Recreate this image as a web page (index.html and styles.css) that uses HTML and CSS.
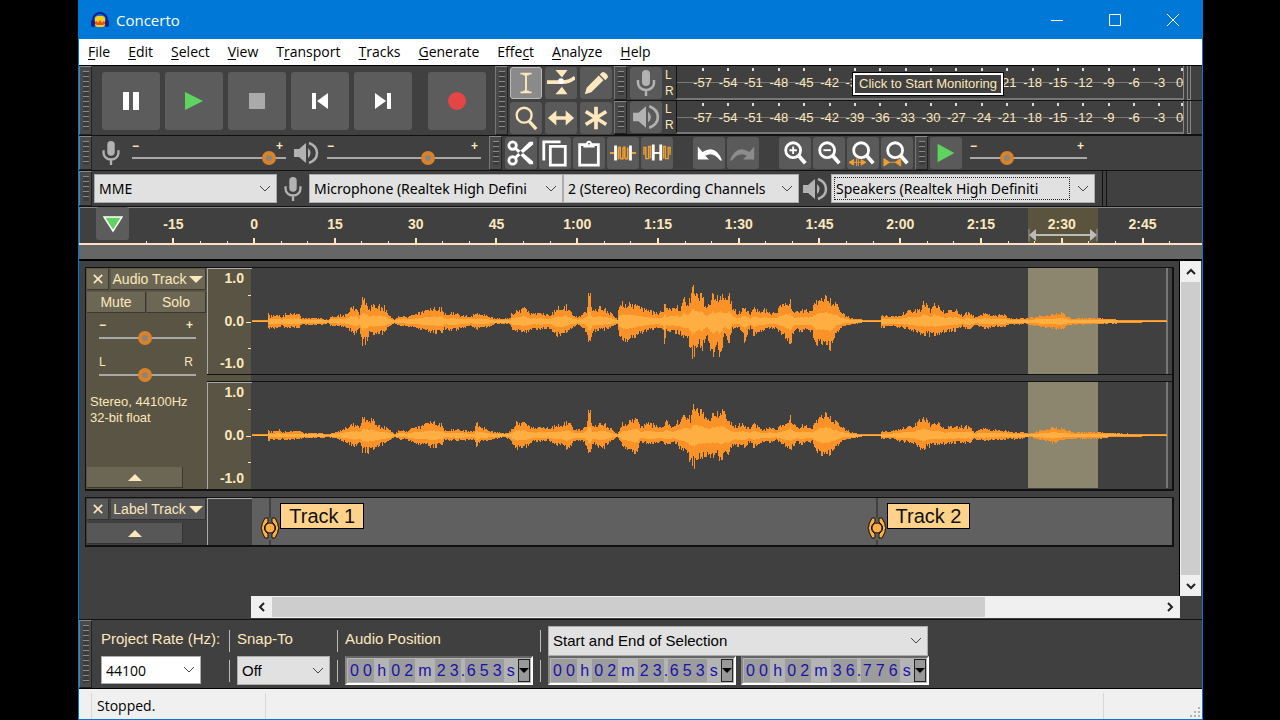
FILE: index.html
```html
<!DOCTYPE html>
<html lang="en">
<head>
    <meta charset="utf-8">
    <title>Concerto</title>
    <link rel="stylesheet" href="styles.css">
</head>
<body>
    <svg class="symbols" aria-hidden="true">
        <symbol id="mic" viewBox="0 0 24 28">
            <rect x="8" y="1" width="8" height="16" rx="4" fill="#b2b2b2"/>
            <path d="M4 11v3a8 7 0 0 0 16 0v-3M12 21v6" fill="none" stroke="#b2b2b2" stroke-width="2.5"/>
        </symbol>
        <symbol id="speaker" viewBox="0 0 26 24">
            <path d="M1 8h5l7-6v20l-7-6H1z" fill="#b2b2b2"/>
            <path d="M15 7q5 5 0 10z" fill="#b2b2b2"/>
            <path d="M16 2q8 3 8 10t-8 10" fill="none" stroke="#b2b2b2" stroke-width="2.500"/>
        </symbol>
        <symbol id="lens" viewBox="0 0 30 30">
            <circle cx="13" cy="12" r="8" fill="none" stroke="#fff" stroke-width="3"/>
            <path d="M19 18l7 8" stroke="#fff" stroke-width="4"/>
        </symbol>
    </svg>

    <div class="window">
        <header class="titlebar">
            <svg class="logo" viewBox="0 0 18 18">
                <path d="M2 12V9a7 7 0 0 1 14 0v3" fill="none" stroke="#1b1f86" stroke-width="2"/>
                <rect x="0" y="9" width="4" height="7" rx="2" fill="#1b1f86"/>
                <rect x="14" y="9" width="4" height="7" rx="2" fill="#1b1f86"/>
                <rect x="4" y="5" width="10" height="11" rx="3" fill="#f6cf1d"/>
                <path d="M4 11l2-1 1 2 2-3 2 3 1-2 2 1v2l-2 1H6l-2-1z" fill="#e8511b"/>
            </svg>
            <span class="title">Concerto</span>
            <button class="win-btn" aria-label="Minimize"><svg viewBox="0 0 14 14"><path d="M1 7.500h12"/></svg></button>
            <button class="win-btn" aria-label="Maximize"><svg viewBox="0 0 14 14"><path d="M1.500 1.500h11v11h-11z"/></svg></button>
            <button class="win-btn" aria-label="Close"><svg viewBox="0 0 14 14"><path d="M1 1l12 12M13 1L1 13"/></svg></button>
        </header>

        <nav class="menubar">
            <a href="#"><u>F</u>ile</a>
            <a href="#"><u>E</u>dit</a>
            <a href="#"><u>S</u>elect</a>
            <a href="#"><u>V</u>iew</a>
            <a href="#">T<u>r</u>ansport</a>
            <a href="#"><u>T</u>racks</a>
            <a href="#"><u>G</u>enerate</a>
            <a href="#">Effe<u>c</u>t</a>
            <a href="#"><u>A</u>nalyze</a>
            <a href="#"><u>H</u>elp</a>
        </nav>

        <!-- transport, tools and meters -->
        <div class="toolbar toolbar-main">
            <div class="grip"></div>
            <div class="transport">
                <button aria-label="Pause"><svg viewBox="0 0 20 20"><path d="M2 1h6v18H2zM12 1h6v18h-6z" fill="#fff"/></svg></button>
                <button aria-label="Play"><svg viewBox="0 0 20 20"><path d="M1 1l18 9-18 9z" fill="#5fd35f"/></svg></button>
                <button aria-label="Stop"><svg viewBox="0 0 20 20"><path d="M2 2h16v16H2z" fill="#aaa"/></svg></button>
                <button aria-label="Skip to Start"><svg viewBox="0 0 20 20"><path d="M2 2h4v16H2zM18 2v16L7 10z" fill="#fff"/></svg></button>
                <button aria-label="Skip to End"><svg viewBox="0 0 20 20"><path d="M14 2h4v16h-4zM2 2v16l11-8z" fill="#fff"/></svg></button>
                <button class="record" aria-label="Record"><svg viewBox="0 0 20 20"><circle cx="10" cy="10" r="9" fill="#e64545"/></svg></button>
            </div>
            <div class="grip"></div>
            <div class="tools">
                <button class="active" aria-label="Selection Tool"><svg viewBox="0 0 30 30"><path d="M9 5h12M9 25h12M15 5v20M12 6h6M12 24h6" fill="none" stroke="#fde7bd" stroke-width="2"/></svg></button>
                <button aria-label="Envelope Tool"><svg viewBox="0 0 30 30"><path d="M9 1h13l-6 8zM9 27h13l-6-8z" fill="#fde7bd"/><path d="M0 14h14q9 1 16-5" fill="none" stroke="#fde7bd" stroke-width="4"/><circle cx="15" cy="13" r="3" fill="#fff"/></svg></button>
                <button aria-label="Draw Tool"><svg viewBox="0 0 30 30"><path d="M3 27l2-7L18 7l5 5L10 25zM19 6l2-2q2-2 5 1t1 5l-2 2z" fill="#fde7bd"/></svg></button>
                <button aria-label="Zoom Tool"><svg viewBox="0 0 30 30"><circle cx="13" cy="12" r="8" fill="none" stroke="#fde7bd" stroke-width="2.500"/><path d="M18 18l8 9" stroke="#fde7bd" stroke-width="3.500"/></svg></button>
                <button aria-label="Time Shift Tool"><svg viewBox="0 0 30 30"><path d="M1 15l9-8v6h10V7l9 8-9 8v-6H10v6z" fill="#fde7bd"/></svg></button>
                <button aria-label="Multi Tool"><svg viewBox="0 0 30 30"><path d="M15 3v24M4 8l22 14M26 8L4 22" stroke="#fde7bd" stroke-width="4"/></svg></button>
            </div>
            <div class="meters">
                <div class="meter">
                    <div class="grip"></div>
                    <button class="tool" aria-label="Record Meter"><svg viewBox="0 0 24 28"><use href="#mic"/></svg></button>
                    <div class="channels"><span>L</span><span>R</span></div>
                    <div class="scale"></div>
                    <div class="clip"></div>
                    <div class="tooltip">Click to Start Monitoring</div>
                </div>
                <div class="meter">
                    <div class="grip"></div>
                    <button class="tool" aria-label="Playback Meter"><svg viewBox="0 0 26 24"><use href="#speaker"/></svg></button>
                    <div class="channels"><span>L</span><span>R</span></div>
                    <div class="scale"></div>
                    <div class="clip"></div>
                </div>
            </div>
        </div>

        <!-- mixer, edit and play-at-speed -->
        <div class="toolbar toolbar-edit">
            <div class="grip"></div>
            <svg class="device" viewBox="0 0 24 28"><use href="#mic"/></svg>
            <label class="slider"><span class="ends"><b>−</b><b>+</b></span><input type="range" value="93" aria-label="Recording Volume"></label>
            <svg class="device" viewBox="0 0 26 24"><use href="#speaker"/></svg>
            <label class="slider"><span class="ends"><b>−</b><b>+</b></span><input type="range" value="67" aria-label="Playback Volume"></label>
            <div class="grip"></div>
            <div class="edit-group">
                <button class="tool" aria-label="Cut"><svg viewBox="0 0 30 30"><g fill="none" stroke="#fff" stroke-width="3"><circle cx="6" cy="7" r="4"/><circle cx="6" cy="23" r="4"/></g><path d="M9 8L28 24v3h-4L8 11zM9 22L28 6V3h-4L8 19z" fill="#fff"/></svg></button>
                <button class="tool" aria-label="Copy"><svg viewBox="0 0 30 30"><path d="M3 23V3h18M10 8h16v20H10z" fill="none" stroke="#fff" stroke-width="3"/></svg></button>
                <button class="tool" aria-label="Paste"><svg viewBox="0 0 30 30"><path d="M5 6h20v22H5z" fill="none" stroke="#fff" stroke-width="3"/><path d="M9 9V5h3a3 3 0 0 1 6 0h3v4z" fill="#fff"/><circle cx="15" cy="5" r="1" fill="#5a5a5a"/></svg></button>
                <button class="tool" aria-label="Trim"><svg viewBox="0 0 30 30"><path d="M1 15h6M23 15h6" stroke="#f0a030" stroke-width="2"/><path d="M10 9v13M12 8v13M15 9v13M17 8v13M20 9v13M10 9h2M12 21h3M15 9h2M17 21h3" fill="none" stroke="#f0a030" stroke-width="1.700"/><path d="M7 7v16M23 7v16" stroke="#fff" stroke-width="3"/></svg></button>
                <button class="tool" aria-label="Silence"><svg viewBox="0 0 30 30"><path d="M1 17V9h2v12h3V8h2v13M22 21V8h2v13h3V9h2v8" fill="none" stroke="#f0a030" stroke-width="1.500"/><path d="M11 6v17M19 6v17" stroke="#fff" stroke-width="3"/><path d="M11 15h8" stroke="#fff" stroke-width="2"/></svg></button>
            </div>
            <div class="edit-group">
                <button class="tool" aria-label="Undo"><svg viewBox="0 0 30 30"><path d="M3 8v14h12l-4-4q8-5 16 5h2Q22 5 8 14z" fill="#fff"/></svg></button>
                <button class="tool" aria-label="Redo"><svg viewBox="0 0 30 30"><path d="M27 8v14H15l4-4q-8-5-16 5H1Q8 5 22 14z" fill="#8c8c8c"/></svg></button>
            </div>
            <div class="edit-group">
                <button class="tool" aria-label="Zoom In"><svg viewBox="0 0 30 30"><use href="#lens"/><path d="M9 12h8M13 8v8" stroke="#fff" stroke-width="2"/></svg></button>
                <button class="tool" aria-label="Zoom Out"><svg viewBox="0 0 30 30"><use href="#lens"/><path d="M9 12h8" stroke="#fff" stroke-width="2"/></svg></button>
                <button class="tool" aria-label="Fit Selection"><svg viewBox="0 0 30 30"><use href="#lens"/><path d="M0 25l5-3v6zM18 25l-5-3v6zM4 25h10M8 21v8M10 21v8" fill="#f0a030" stroke="#f0a030"/></svg></button>
                <button class="tool" aria-label="Fit Project"><svg viewBox="0 0 30 30"><use href="#lens"/><path d="M1 21v8l6-4zM19 21v8l-6-4zM7 25h6" fill="#f0a030" stroke="#f0a030"/></svg></button>
            </div>
            <div class="grip"></div>
            <button class="tool play-speed" aria-label="Play at Speed"><svg viewBox="0 0 30 30"><path d="M6 5l18 10L6 25z" fill="#5fd35f"/></svg></button>
            <label class="slider short"><span class="ends"><b>−</b><b>+</b></span><input type="range" value="29" aria-label="Playback Speed"></label>
        </div>

        <!-- devices -->
        <div class="toolbar toolbar-device">
            <div class="grip"></div>
            <select class="host" aria-label="Audio Host"><option>MME</option></select>
            <svg class="device" viewBox="0 0 24 28"><use href="#mic"/></svg>
            <select class="input-device" aria-label="Recording Device"><option>Microphone (Realtek High Defini</option></select>
            <select class="input-channels" aria-label="Recording Channels"><option>2 (Stereo) Recording Channels</option></select>
            <svg class="device" viewBox="0 0 26 24"><use href="#speaker"/></svg>
            <div class="output-device"><select aria-label="Playback Device"><option>Speakers (Realtek High Definiti</option></select></div>
            <div class="toolbar-end"></div>
        </div>

        <div class="timeline">
            <div class="ruler">
                <div class="ruler-lead">
                    <button class="pin" aria-label="Pinned Play Head"><svg viewBox="0 0 20 18"><path d="M1 2h18l-9 14z" fill="#5fd35f" stroke="#fff" stroke-width="1.500"/></svg></button>
                </div>
                <div class="ruler-cells" id="ruler"></div>
                <div class="ruler-selection">
                    <svg viewBox="0 0 70 12"><path d="M1 0v12M69 0v12" stroke="#999"/><path d="M6 6h58" stroke="#bbb" stroke-width="2"/><path d="M1 6l7-6v12zM69 6l-7-6v12z" fill="#bbb"/></svg>
                </div>
            </div>
            <div class="scrub"></div>
        </div>

        <main class="tracks">
            <div class="track-area">
                <section class="track audio-track">
                    <div class="panel">
                        <div class="panel-head">
                            <button class="close" aria-label="Close Audio Track"><svg viewBox="0 0 12 12"><path d="M1 1l10 10M11 1L1 11"/></svg></button>
                            <button class="name">Audio Track<i class="down"></i></button>
                        </div>
                        <div class="panel-head pair">
                            <button>Mute</button>
                            <button>Solo</button>
                        </div>
                        <label class="slider panel-slider"><span class="ends"><b>−</b><b>+</b></span><input type="range" value="47" aria-label="Gain"></label>
                        <label class="slider panel-slider"><span class="ends"><span>L</span><span>R</span></span><input type="range" value="47" aria-label="Pan"></label>
                        <p class="format">Stereo, 44100Hz<br>32-bit float</p>
                        <button class="collapse" aria-label="Collapse Audio Track"><i class="up"></i></button>
                    </div>
                    <div class="channel-list">
                        <div class="channel">
                            <div class="vruler"><span>1.0</span><span class="zero">0.0</span><span>-1.0</span></div>
                            <svg class="wave" data-channel="0" viewBox="0 0 920 106" preserveAspectRatio="none"></svg>
                        </div>
                        <div class="channel">
                            <div class="vruler"><span>1.0</span><span class="zero">0.0</span><span>-1.0</span></div>
                            <svg class="wave" data-channel="1" viewBox="0 0 920 106" preserveAspectRatio="none"></svg>
                        </div>
                    </div>
                </section>

                <section class="track label-track">
                    <div class="panel">
                        <div class="panel-head">
                            <button class="close" aria-label="Close Label Track"><svg viewBox="0 0 12 12"><path d="M1 1l10 10M11 1L1 11"/></svg></button>
                            <button class="name">Label Track<i class="down"></i></button>
                        </div>
                        <button class="collapse" aria-label="Collapse Label Track"><i class="up"></i></button>
                    </div>
                    <div class="vruler"></div>
                    <div class="labels" id="labels"></div>
                </section>
            </div>
            <div class="scrollbar vertical">
                <button aria-label="Scroll Up"><svg viewBox="0 0 10 8"><path d="M1 6l4-4 4 4"/></svg></button>
                <div class="thumb"></div>
                <button aria-label="Scroll Down"><svg viewBox="0 0 10 8"><path d="M1 2l4 4 4-4"/></svg></button>
            </div>
            <div class="scrollbar horizontal">
                <button aria-label="Scroll Left"><svg viewBox="0 0 8 10"><path d="M6 1L2 5l4 4"/></svg></button>
                <div class="thumb"></div>
                <div class="rest"></div>
                <button aria-label="Scroll Right"><svg viewBox="0 0 8 10"><path d="M2 1l4 4-4 4"/></svg></button>
            </div>
        </main>

        <div class="selection-bar">
            <div class="grip"></div>
            <div class="field rate">
                <label for="rate">Project Rate (Hz):</label>
                <select id="rate"><option>44100</option></select>
            </div>
            <div class="rule"></div>
            <div class="field snap">
                <label for="snap">Snap-To</label>
                <select id="snap"><option>Off</option></select>
            </div>
            <div class="rule"></div>
            <div class="field position">
                <span class="caption">Audio Position</span>
                <div class="time" data-time="00 h 02 m 23.653 s"></div>
            </div>
            <div class="rule"></div>
            <div class="field range">
                <select aria-label="Selection Format"><option>Start and End of Selection</option></select>
                <div class="times">
                    <div class="time" data-time="00 h 02 m 23.653 s"></div>
                    <div class="time" data-time="00 h 02 m 36.776 s"></div>
                </div>
            </div>
        </div>

        <footer class="statusbar">
            <span class="status">Stopped.</span>
            <span class="status-rest"></span>
            <svg class="resize" viewBox="0 0 12 12"><path d="M9 1h2v2H9zM5 5h2v2H5zM9 5h2v2H9zM1 9h2v2H1zM5 9h2v2H5zM9 9h2v2H9z" fill="#b4b4b4"/></svg>
        </footer>
    </div>

    <script src="script.js"></script>
</body>
</html>
```

FILE: styles.css
```css
* {
    box-sizing: border-box;
}
body {
    margin: 0;
    padding: 0 77px 0 78px;
    background-color: #000;
    font-family: "Liberation Sans", Arial, sans-serif;
    font-size: 14px;
    color: #fde7bd;
}
button {
    padding: 0;
    border: 0;
    background: none;
    color: inherit;
    font: inherit;
    display: flex;
    align-items: center;
    justify-content: center;
}
p {
    margin: 0;
}
.symbols {
    display: none;
}
.window {
    display: flex;
    flex-direction: column;
    height: 100vh;
    border: 1px solid #0078d7;
    border-top: 0;
    background-color: #404040;
    overflow: hidden;
}

/* title and menu */
.titlebar {
    display: flex;
    align-items: center;
    height: 39px;
    padding-left: 12px;
    background-color: #0078d7;
    color: #fff;
    font-family: "Open Sans", sans-serif;
    font-size: 15px;
}
.logo {
    width: 18px;
    height: 18px;
    margin-right: 7px;
}
.title {
    flex: 1;
}
.win-btn {
    width: 58px;
    height: 39px;
}
.win-btn svg {
    width: 14px;
    height: 14px;
    fill: none;
    stroke: #fff;
}
.menubar {
    display: flex;
    align-items: center;
    gap: 18px;
    height: 26px;
    padding: 0 0 2px 9px;
    background-color: #fff;
    font-family: "Open Sans", sans-serif;
    font-size: 14px;
}
.menubar a {
    color: #000;
    text-decoration: none;
}
.menubar u {
    text-underline-offset: 2px;
}

/* toolbars */
.toolbar {
    display: flex;
    align-items: center;
    border-bottom: 1px solid #111;
}
.toolbar-main {
    height: 71px;
    border-top: 1px solid #000;
}
.toolbar-edit {
    height: 35px;
}
.toolbar-device {
    height: 36px;
}
.grip {
    flex: none;
    align-self: stretch;
    width: 13px;
    border: 1px solid #222;
    border-top-color: #888;
    border-left-color: #777;
    background: repeating-linear-gradient(#8a8a8a 0 1px, #3c3c3c 1px 5px) center / 6px calc(100% - 8px) no-repeat #4a4a4a;
}
.transport {
    display: flex;
    gap: 5px;
    padding: 0 9px 0 10px;
}
.transport button {
    width: 58px;
    height: 58px;
    border-radius: 3px;
    background-color: #5c5c5c;
}
.transport .record {
    margin-left: 11px;
}
.transport svg {
    width: 20px;
    height: 20px;
}
.tools {
    display: grid;
    grid-template-columns: repeat(3, 32px);
    gap: 3px;
    padding: 0 2px;
}
.tools button,
.tool {
    flex: none;
    width: 32px;
    height: 32px;
    border-radius: 3px;
    background-color: #5a5a5a;
}
.tools .active {
    background-color: #8a8a8a;
    border: 1px solid #bbb;
}
.tools svg,
.tool svg {
    width: 28px;
    height: 28px;
}
.meters {
    flex: 1;
    align-self: stretch;
    display: flex;
    flex-direction: column;
}
.meter {
    position: relative;
    flex: 1;
    display: flex;
    align-items: center;
    gap: 3px;
    padding-right: 11px;
    border-bottom: 1px solid #111;
    font-size: 13px;
}
.channels {
    display: flex;
    flex-direction: column;
    width: 8px;
    font-size: 12px;
    line-height: 16px;
}
.scale {
    flex: 1;
    align-self: stretch;
    display: flex;
    padding-left: 13px;
    border-left: 1px solid #111;
    border-right: 1px solid #888;
    border-bottom: 2px solid #777;
    background: linear-gradient(#777, #777) 0 16px / 100% 1px no-repeat;
}
.scale span {
    flex: 1;
    display: flex;
    flex-direction: column;
    align-items: center;
    line-height: 14px;
}
.scale span::before {
    content: "";
    width: 2px;
    height: 3px;
    margin: 2px 0 5px;
    background-color: #ddd;
}
.scale span:last-child {
    flex: 0 0 11px;
    align-items: flex-end;
}
.clip {
    align-self: stretch;
    width: 4px;
    border: 1px solid #888;
    border-top: 0;
}
.tooltip {
    position: absolute;
    left: 239px;
    top: 7px;
    padding: 0 4px;
    border: 2px solid #fff;
    outline: 1px solid #000;
    background-color: #404040;
    line-height: 18px;
}
.device {
    flex: none;
    width: 26px;
    height: 26px;
}

/* sliders */
.slider {
    display: flex;
    flex-direction: column;
    width: 154px;
}
.ends {
    display: flex;
    justify-content: space-between;
    padding-right: 3px;
    line-height: 10px;
    font-size: 12px;
}
.slider input {
    appearance: none;
    width: 100%;
    height: 15px;
    margin: 0;
    background: linear-gradient(#a8a8a8, #a8a8a8) center / 100% 2px no-repeat;
}
.slider input::-webkit-slider-thumb {
    appearance: none;
    width: 14px;
    height: 14px;
    border: 4px solid #d9822b;
    border-radius: 50%;
    background-color: #8f8577;
}
.toolbar-edit .device {
    margin: 0 8px 0 7px;
}
.toolbar-edit .grip + .device {
    margin: 0 8px 0 6px;
}
.toolbar-edit .slider + .grip {
    margin-left: 8px;
}
.short {
    width: 117px;
}
.edit-group {
    display: flex;
    gap: 2px;
    margin: 0 20px 0 3px;
}
.edit-group + .edit-group {
    margin-left: 0;
}
.edit-group:has(+ .grip) {
    margin-right: 2px;
}
.play-speed {
    margin: 0 8px 0 2px;
}

/* drop-downs */
select {
    appearance: none;
    height: 29px;
    padding: 0 28px 0 4px;
    border: 1px solid #acacac;
    border-radius: 0;
    background: url("data:image/svg+xml,%3Csvg xmlns='http://www.w3.org/2000/svg' width='12' height='8'%3E%3Cpath d='M1 1l5 5 5-5' fill='none' stroke='%23444'/%3E%3C/svg%3E") right 5px center no-repeat #e1e1e1;
    color: #000;
    font-family: "Noto Sans", sans-serif;
    font-size: 14px;
}
.host {
    width: 183px;
    margin-left: 2px;
}
.toolbar-device .device {
    margin: 0 3px;
}
.input-device {
    width: 254px;
}
.input-channels {
    width: 236px;
}
.output-device {
    position: relative;
    width: 264px;
}
.output-device select {
    width: 100%;
}
/* focus ring round the value only */
.output-device::after {
    content: "";
    position: absolute;
    inset: 3px 25px 3px 3px;
    border: 1px dotted #222;
    pointer-events: none;
}
.toolbar-end {
    align-self: stretch;
    width: 5px;
    margin-left: 7px;
    border: solid #111;
    border-width: 0 1px;
}

/* timeline */
.ruler {
    position: relative;
    display: flex;
    height: 38px;
    border-bottom: 2px solid #fde0c0;
    box-shadow: inset 0 1px #888;
    padding-right: 19px;
    font-weight: bold;
    line-height: 34px;
}
.ruler-lead {
    width: 54px;
    padding-left: 16px;
    border-left: 1px solid #777;
}
.pin {
    width: 33px;
    height: 33px;
    border-radius: 3px;
    background-color: #5c5c5c;
}
.pin svg {
    width: 20px;
    height: 18px;
}
.ruler-cells {
    position: relative;
    z-index: 1;
    flex: 1;
    display: flex;
}
.ruler-cells div {
    flex: 1;
    display: flex;
    flex-direction: column;
    text-align: center;
}
.ticks {
    display: flex;
    justify-content: space-around;
    align-items: flex-end;
    height: 5px;
    margin-top: -3px;
}
.ticks i {
    width: 1px;
    height: 2px;
    background-color: #fde7bd;
}
.ticks i:nth-child(2) {
    width: 2px;
    height: 5px;
}
.ruler-selection {
    position: absolute;
    right: 104px;
    top: 1px;
    width: 70px;
    height: 35px;
    background-color: #5a543f;
}
.ruler-selection svg {
    position: absolute;
    left: 0;
    bottom: 2px;
    width: 70px;
    height: 12px;
}
.scrub {
    height: 16px;
    border-bottom: 2px solid #000;
    background-color: #666;
}

/* tracks */
.tracks {
    flex: 1;
    display: grid;
    grid-template: 1fr 23px / 1fr 22px;
}
.track-area {
    padding: 6px 5px 0 6px;
    border-right: 1px solid #000;
}
.track {
    display: flex;
    border: 1px solid #111;
    border-width: 1px 2px 2px 1px;
}
.panel {
    display: flex;
    flex-direction: column;
    width: 121px;
    padding: 1px;
}
.audio-track {
    height: 224px;
    margin-bottom: 6px;
}
.audio-track .panel {
    background-color: #595443;
}
.panel-head {
    display: flex;
    gap: 2px;
    margin-bottom: 2px;
}
.panel button {
    height: 21px;
    border-right: 1px solid #3a382f;
    border-bottom: 1px solid #3a382f;
    background-color: #6c6755;
}
.panel .close {
    width: 22px;
}
.close svg {
    width: 10px;
    height: 10px;
    stroke: #fde7bd;
    stroke-width: 2;
}
.panel .name {
    flex: 1;
    gap: 3px;
}
.panel .pair {
    gap: 1px;
    margin-bottom: 7px;
}
.pair button {
    flex: 1;
}
.down,
.up {
    border: 7px solid transparent;
}
.down {
    border-bottom: 0;
    border-top-color: #fde7bd;
}
.up {
    border-top: 0;
    border-bottom-color: #fde7bd;
}
.panel-slider {
    width: 97px;
    margin: 0 0 12px 12px;
}
.format {
    margin-left: 3px;
    font-size: 13px;
    line-height: 16px;
}
.panel .collapse {
    width: 96px;
    margin-top: auto;
}
.channel-list {
    flex: 1;
    display: flex;
    flex-direction: column;
    justify-content: space-between;
    background: linear-gradient(90deg, #595443 44px, #404040 44px);
}
.channel {
    display: flex;
    height: 107px;
    border-bottom: 1px solid #111;
    box-shadow: 0 -1px #111;
}
.channel:last-child {
    border-bottom: 0;
}
.vruler {
    flex: none;
    display: flex;
    flex-direction: column;
    justify-content: space-between;
    width: 45px;
    padding: 1px 8px 3px 0;
    border-left: 1px solid #aaa;
    border-top: 1px solid #aaa;
    background:
        linear-gradient(#fde7bd, #fde7bd) right 1px top 26px / 3px 1px no-repeat,
        linear-gradient(#fde7bd, #fde7bd) right 1px top 53px / 5px 1px no-repeat,
        linear-gradient(#fde7bd, #fde7bd) right 1px top 79px / 3px 1px no-repeat;
    font-weight: bold;
    line-height: 16px;
    text-align: right;
}
.wave {
    flex: 1;
    min-width: 0;
    height: 106px;
    background-color: #404040;
}
.wave .selection {
    fill: #8c866f;
}
.wave .end {
    fill: #777;
}
.wave .peak {
    fill: #fb9228;
}
.wave .rms {
    fill: #ffae42;
}
.label-track {
    height: 50px;
}
.label-track .panel button {
    background-color: #575757;
    border-color: #333;
}
.label-track .vruler {
    background: #404040;
}
.labels {
    position: relative;
    flex: 1;
    background-color: #606060;
}
.label {
    position: absolute;
    top: 0;
    height: 100%;
    display: flex;
    align-items: flex-start;
}
.label svg {
    width: 20px;
    height: 47px;
}
.label span {
    margin-top: 5px;
    padding: 0 8px;
    border: 1px solid #000;
    background-color: #ffd28c;
    color: #111;
    font-size: 20px;
    line-height: 24px;
}

/* scrollbars */
.scrollbar {
    display: flex;
    background-color: #f0f0f0;
}
.scrollbar svg {
    width: 10px;
    height: 10px;
    fill: none;
    stroke: #222;
    stroke-width: 2;
}
.scrollbar .thumb {
    background-color: #cdcdcd;
}
.vertical {
    flex-direction: column;
    padding: 0 1px;
    margin-right: 1px;
}
.vertical button {
    height: 21px;
}
.vertical .thumb {
    flex: 1;
}
.horizontal {
    margin: 0 0 1px 172px;
    padding: 1px 0;
}
.horizontal button {
    width: 21px;
}
.horizontal .thumb {
    flex: 713;
}
.horizontal .rest {
    flex: 174;
}

/* selection toolbar */
.selection-bar {
    display: flex;
    height: 70px;
    border-top: 1px solid #111;
    border-bottom: 1px solid #000;
}
.selection-bar .rule {
    width: 1px;
    margin: 10px 7px 6px;
    background: linear-gradient(#bbb 22px, transparent 22px 30px, #bbb 30px);
}
.field {
    display: flex;
    flex-direction: column;
    padding-top: 6px;
    font-size: 15px;
}
.field label,
.caption {
    height: 30px;
    line-height: 26px;
    white-space: nowrap;
}
.field select {
    font-family: "Liberation Sans", Arial, sans-serif;
    font-size: 15px;
}
.rate {
    width: 121px;
    margin-left: 9px;
}
.rate select {
    width: 100px;
    height: 28px;
    background-color: #fff;
    font-family: "Open Sans", sans-serif;
    font-size: 14px;
}
.snap {
    width: 93px;
}
.field.range select {
    width: 380px;
    height: 30px;
    padding-bottom: 2px;
}
.times {
    display: flex;
    gap: 5px;
}
.time {
    display: flex;
    width: 188px;
    height: 29px;
    padding: 1px;
    border: 2px solid #fff;
    border-top-color: #666;
    border-left-color: #888;
    background-color: #b4b4b4;
    color: #1b13a8;
    font-size: 16px;
    line-height: 24px;
    text-align: center;
}
.time span {
    flex: auto;
}
.time .digit {
    flex: none;
    width: 13px;
    background-color: #9c9c9c;
}
.time .dot {
    flex: none;
    width: 4px;
}
.time button {
    width: 12px;
    border: 1px solid #222;
    background-color: #999;
}
.time i {
    border: 5px solid transparent;
    border-top-color: #000;
    border-bottom: 0;
}

/* status bar */
.statusbar {
    display: flex;
    align-items: flex-end;
    height: 30px;
    background-color: #f0f0f0;
    color: #000;
    font-family: "Open Sans", sans-serif;
    font-size: 14px;
    line-height: 26px;
}
.status {
    width: 175px;
    margin-left: 12px;
    padding-left: 5px;
    border: solid #d7d7d7;
    border-width: 0 1px;
}
.status-rest {
    flex: 1;
    height: 26px;
    margin-right: 85px;
    border-right: 1px solid #d7d7d7;
}
.resize {
    width: 12px;
    height: 12px;
    margin: 0 1px 1px 0;
}
```

FILE: script.js
```js
// envelope points: [x, up, down]
const channels = [
    [[0,1,0],[15,1,0],[16,9,8],[18,5,5],[25,8,8],[29,4,4],[34,8,6],[47,7,6],[49,3,3],[68,3,3],[76,1,1],[78,5,4],[93,7,5],[98,13,9],[104,15,14],[107,8,8],
     [110,22,23],[114,21,22],[116,14,14],[124,17,14],[132,15,11],[136,8,6],[142,1,1],[146,5,4],[158,5,5],[166,9,7],[176,11,10],[183,14,12],[190,13,13],[192,7,7],[200,9,9],[208,6,7],
     [218,5,4],[226,8,8],[236,5,5],[243,3,2],[257,3,2],[260,9,8],[272,14,12],[278,8,8],[298,7,7],[304,13,14],[310,15,17],[314,16,11],[320,7,6],[326,4,3],[332,10,8],[335,14,12],[336,27,27],
     [338,27,27],[340,12,11],[348,15,8],[354,12,8],[360,7,5],[365,2,2],[367,19,17],[376,20,21],[384,16,14],[396,11,9],[406,8,6],[411,12,12],[412,22,24],[414,12,10],[422,18,12],[428,14,12],[432,24,20],
     [436,18,20],[440,34,35],[443,33,32],[446,30,22],[450,26,28],[454,15,15],[460,28,34],[464,27,30],[468,30,34],[472,20,15],[477,32,24],[480,15,8],[486,8,5],[492,16,20],[498,6,5],[501,14,14],
     [508,9,9],[512,12,9],[518,8,6],[524,10,7],[532,22,15],[538,22,24],[542,9,9],[548,12,10],[558,11,9],[566,24,25],[572,27,24],[578,24,27],[584,17,12],[590,8,5],[598,3,3],[608,2,1],[612,1,0],
     [628,1,0],[629,6,6],[642,5,5],[656,11,8],[668,12,12],[671,22,14],[678,12,14],[682,20,14],[692,10,10],[704,11,9],[710,6,4],[716,9,9],[724,4,3],[732,8,7],[744,6,5],[752,7,5],[756,3,3],
     [773,3,2],[784,5,5],[794,6,6],[808,9,8],[818,3,3],[848,3,2],[864,2,2],[866,1,1],[889,1,1],[890,1,0],[914,1,0]],
    [[0,1,0],[15,1,0],[16,6,6],[18,3,3],[26,6,5],[30,3,3],[34,4,4],[48,4,3],[52,2,2],[70,2,2],[76,1,1],[88,5,4],[98,10,9],[104,12,12],[108,8,8],[110,17,16],[118,17,17],[122,14,14],
     [128,9,10],[136,8,6],[142,1,1],[148,6,4],[154,4,3],[162,8,8],[172,11,9],[180,14,12],[190,11,11],[192,5,4],[204,6,5],[222,4,4],[224,13,11],[230,8,6],[238,4,4],[253,2,1],[258,4,5],
     [264,14,13],[272,13,13],[280,7,6],[296,8,5],[304,10,9],[316,14,14],[322,6,5],[330,6,5],[335,14,12],[336,24,23],[338,24,23],[340,10,8],[350,13,14],[358,7,6],[365,1,1],[370,12,10],[380,17,18],
     [385,16,17],[388,8,6],[396,13,9],[408,8,7],[414,14,10],[420,10,8],[424,14,8],[434,22,20],[438,18,26],[442,32,31],[445,30,24],[450,24,22],[456,18,22],[462,24,20],[468,27,24],[472,22,22],
     [476,17,20],[482,9,9],[490,12,13],[498,6,6],[501,13,12],[510,5,6],[518,8,7],[524,6,4],[532,13,10],[538,20,14],[544,8,7],[550,10,9],[560,8,6],[568,22,22],[576,23,20],[582,15,14],
     [590,8,5],[598,3,3],[608,1,1],[612,1,0],[628,1,0],[629,4,3],[640,4,3],[648,8,6],[662,10,8],[671,20,15],[678,12,10],[685,14,9],[692,8,8],[706,9,7],[718,9,8],[722,3,3],[730,7,5],
     [748,5,4],[768,3,3],[779,2,1],[784,4,4],[794,6,5],[801,9,8],[810,6,4],[823,3,3],[848,3,3],[861,2,1],[888,1,1],[890,1,0],[914,1,0]]
];

function bars(points, scale, rough) {
    let d = '';
    let k = 0;
    for (let x = 0; x < 915; x++) {
        while (k < points.length - 2 && points[k + 1][0] <= x) {
            k++;
        }
        const [x0, u0, d0] = points[k];
        const [x1, u1, d1] = points[k + 1];
        const t = Math.min(1, (x - x0) / (x1 - x0));
        const n1 = 1 - rough * Math.abs(Math.sin(x * 12.9 + 1) * 43.7 % 1);
        const n2 = 1 - rough * Math.abs(Math.sin(x * 7.3 + 4) * 37.1 % 1);
        const up = Math.round((u0 + (u1 - u0) * t) * n1 * scale);
        const down = Math.round((d0 + (d1 - d0) * t) * n2 * scale);
        d += `M${x} ${53 - up}h1v${up + down + 1}h-1z`;
    }
    return d;
}

document.querySelectorAll('.wave').forEach(wave => {
    const points = channels[wave.dataset.channel];
    wave.innerHTML = `
        <rect class="selection" x="776" y="0" width="70" height="106"/>
        <rect class="end" x="914" y="0" width="2" height="106"/>
        <path class="peak" shape-rendering="crispEdges" d="${bars(points, 1.08, 0.4)}"/>
        <path class="rms" shape-rendering="crispEdges" d="${bars(points, 0.36, 0.2)}"/>
    `;
});

// meter scales, every 3 dB
document.querySelectorAll('.scale').forEach(scale => {
    for (let db = -57; db <= 0; db += 3) {
        scale.innerHTML += `<span>${db}</span>`;
    }
});

// timeline, every 15 seconds
const ruler = document.getElementById('ruler');
for (let s = -15; s <= 165; s += 15) {
    const text = s < 60 ? s : Math.floor(s / 60) + ':' + String(s % 60).padStart(2, '0');
    ruler.innerHTML += `<div>${text}<span class="ticks"><i></i><i></i><i></i></span></div>`;
}

// labels, placed by their share of the visible time
const labels = [
    { text: 'Track 1', at: 0.9 },
    { text: 'Track 2', at: 66.8 }
];
document.getElementById('labels').innerHTML = labels.map(label => `
    <div class="label" style="left: ${label.at}%">
        <svg viewBox="0 0 20 47">
            <path d="M10 0v20M10 42v5" stroke="#222"/>
            <path d="M8 20H5L2 26v2l-1 2 1 2v2l3 6h3v-4l-2-2a6 6 0 0 1 0-8l2-2zM12 20h3l3 6v2l1 2-1 2v2l-3 6h-3v-4l2-2a6 6 0 0 0 0-8l-2-2z" fill="#ffae42" stroke="#111"/>
            <circle cx="10" cy="30" r="5" fill="#ffae42" stroke="#111"/>
        </svg>
        <span>${label.text}</span>
    </div>
`).join('');

// time fields
document.querySelectorAll('.time').forEach(time => {
    time.innerHTML = time.dataset.time.replace(/ /g, '').split('').map(c => {
        const type = c === '.' ? 'dot' : /\d/.test(c) ? 'digit' : 'unit';
        return `<span class="${type}">${c}</span>`;
    }).join('') + '<button aria-label="Time Format"><i></i></button>';
});
```
